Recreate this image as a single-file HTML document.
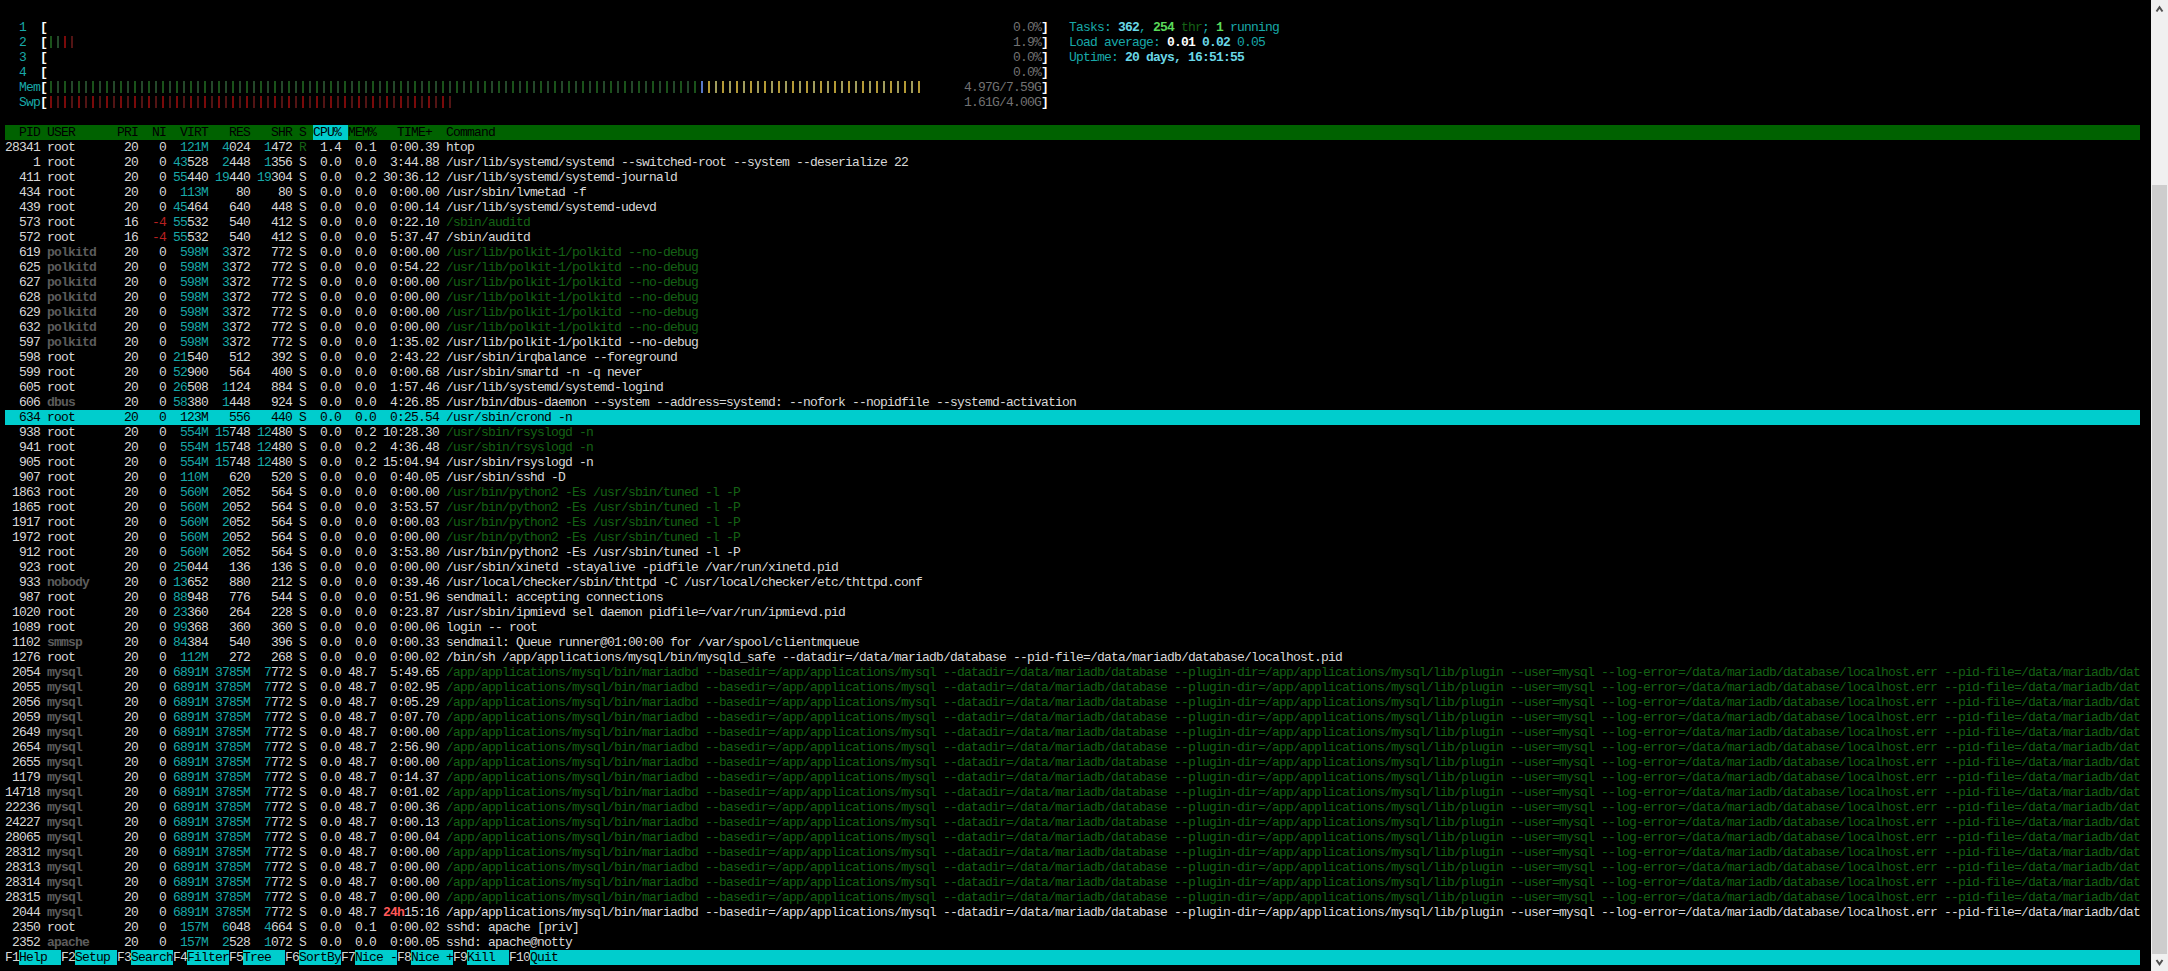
<!DOCTYPE html><html><head><meta charset="utf-8"><style>
html,body{margin:0;padding:0;background:#000;width:2168px;height:971px;overflow:hidden}
#t{position:absolute;left:0;top:0;width:2151px;height:971px;background:#000}
.l{position:absolute;left:5px;height:15px;line-height:15px;white-space:pre;font-family:"Liberation Mono",monospace;font-size:13px;letter-spacing:-0.80127px;color:#e8e8e8}
.bg{position:absolute;height:15px}
.br{position:absolute}
.sw{color:#d8d8d8}
.sW{color:#ffffff;font-weight:bold}
.sc{color:#18a8a8}
.sC{color:#6ad8e8;font-weight:bold}
.sg{color:#156215}
.sG{color:#5ada5a;font-weight:bold}
.sd{color:#5c5c5c;font-weight:bold}
.sk{color:#727272}
.sr{color:#b82020}
.sR{color:#ff5858;font-weight:bold}
.sK{color:#000000}
#sb{position:absolute;left:2151px;top:0;width:17px;height:971px;background:#f0f0f0}
#th{position:absolute;left:2152px;top:185px;width:15px;height:769px;background:#cdcdcd}
</style></head><body><div id="t">
<div class="bg" style="top:125px;left:5px;width:2135px;background:#006200"></div>
<div class="bg" style="top:125px;left:313px;width:35px;background:#00cdcd"></div>
<div class="bg" style="top:410px;left:5px;width:2135px;background:#00cdcd"></div>
<div class="bg" style="top:950px;left:19px;width:42px;background:#00cdcd"></div>
<div class="bg" style="top:950px;left:75px;width:42px;background:#00cdcd"></div>
<div class="bg" style="top:950px;left:131px;width:42px;background:#00cdcd"></div>
<div class="bg" style="top:950px;left:187px;width:42px;background:#00cdcd"></div>
<div class="bg" style="top:950px;left:243px;width:42px;background:#00cdcd"></div>
<div class="bg" style="top:950px;left:299px;width:42px;background:#00cdcd"></div>
<div class="bg" style="top:950px;left:355px;width:42px;background:#00cdcd"></div>
<div class="bg" style="top:950px;left:411px;width:42px;background:#00cdcd"></div>
<div class="bg" style="top:950px;left:467px;width:42px;background:#00cdcd"></div>
<div class="bg" style="top:950px;left:530px;width:1610px;background:#00cdcd"></div>
<div class="br" style="top:36px;left:50px;width:2px;height:12px;background:#1a521a"></div>
<div class="br" style="top:36px;left:57px;width:2px;height:12px;background:#24482a"></div>
<div class="br" style="top:36px;left:64px;width:2px;height:12px;background:#7a0a0a"></div>
<div class="br" style="top:36px;left:71px;width:2px;height:12px;background:#521414"></div>
<div class="br" style="top:81px;left:50px;width:2px;height:12px;background:#1a521a"></div>
<div class="br" style="top:81px;left:57px;width:2px;height:12px;background:#24482a"></div>
<div class="br" style="top:81px;left:64px;width:2px;height:12px;background:#1a521a"></div>
<div class="br" style="top:81px;left:71px;width:2px;height:12px;background:#24482a"></div>
<div class="br" style="top:81px;left:78px;width:2px;height:12px;background:#1a521a"></div>
<div class="br" style="top:81px;left:85px;width:2px;height:12px;background:#24482a"></div>
<div class="br" style="top:81px;left:92px;width:2px;height:12px;background:#1a521a"></div>
<div class="br" style="top:81px;left:99px;width:2px;height:12px;background:#24482a"></div>
<div class="br" style="top:81px;left:106px;width:2px;height:12px;background:#1a521a"></div>
<div class="br" style="top:81px;left:113px;width:2px;height:12px;background:#24482a"></div>
<div class="br" style="top:81px;left:120px;width:2px;height:12px;background:#1a521a"></div>
<div class="br" style="top:81px;left:127px;width:2px;height:12px;background:#24482a"></div>
<div class="br" style="top:81px;left:134px;width:2px;height:12px;background:#1a521a"></div>
<div class="br" style="top:81px;left:141px;width:2px;height:12px;background:#24482a"></div>
<div class="br" style="top:81px;left:148px;width:2px;height:12px;background:#1a521a"></div>
<div class="br" style="top:81px;left:155px;width:2px;height:12px;background:#24482a"></div>
<div class="br" style="top:81px;left:162px;width:2px;height:12px;background:#1a521a"></div>
<div class="br" style="top:81px;left:169px;width:2px;height:12px;background:#24482a"></div>
<div class="br" style="top:81px;left:176px;width:2px;height:12px;background:#1a521a"></div>
<div class="br" style="top:81px;left:183px;width:2px;height:12px;background:#24482a"></div>
<div class="br" style="top:81px;left:190px;width:2px;height:12px;background:#1a521a"></div>
<div class="br" style="top:81px;left:197px;width:2px;height:12px;background:#24482a"></div>
<div class="br" style="top:81px;left:204px;width:2px;height:12px;background:#1a521a"></div>
<div class="br" style="top:81px;left:211px;width:2px;height:12px;background:#24482a"></div>
<div class="br" style="top:81px;left:218px;width:2px;height:12px;background:#1a521a"></div>
<div class="br" style="top:81px;left:225px;width:2px;height:12px;background:#24482a"></div>
<div class="br" style="top:81px;left:232px;width:2px;height:12px;background:#1a521a"></div>
<div class="br" style="top:81px;left:239px;width:2px;height:12px;background:#24482a"></div>
<div class="br" style="top:81px;left:246px;width:2px;height:12px;background:#1a521a"></div>
<div class="br" style="top:81px;left:253px;width:2px;height:12px;background:#24482a"></div>
<div class="br" style="top:81px;left:260px;width:2px;height:12px;background:#1a521a"></div>
<div class="br" style="top:81px;left:267px;width:2px;height:12px;background:#24482a"></div>
<div class="br" style="top:81px;left:274px;width:2px;height:12px;background:#1a521a"></div>
<div class="br" style="top:81px;left:281px;width:2px;height:12px;background:#24482a"></div>
<div class="br" style="top:81px;left:288px;width:2px;height:12px;background:#1a521a"></div>
<div class="br" style="top:81px;left:295px;width:2px;height:12px;background:#24482a"></div>
<div class="br" style="top:81px;left:302px;width:2px;height:12px;background:#1a521a"></div>
<div class="br" style="top:81px;left:309px;width:2px;height:12px;background:#24482a"></div>
<div class="br" style="top:81px;left:316px;width:2px;height:12px;background:#1a521a"></div>
<div class="br" style="top:81px;left:323px;width:2px;height:12px;background:#24482a"></div>
<div class="br" style="top:81px;left:330px;width:2px;height:12px;background:#1a521a"></div>
<div class="br" style="top:81px;left:337px;width:2px;height:12px;background:#24482a"></div>
<div class="br" style="top:81px;left:344px;width:2px;height:12px;background:#1a521a"></div>
<div class="br" style="top:81px;left:351px;width:2px;height:12px;background:#24482a"></div>
<div class="br" style="top:81px;left:358px;width:2px;height:12px;background:#1a521a"></div>
<div class="br" style="top:81px;left:365px;width:2px;height:12px;background:#24482a"></div>
<div class="br" style="top:81px;left:372px;width:2px;height:12px;background:#1a521a"></div>
<div class="br" style="top:81px;left:379px;width:2px;height:12px;background:#24482a"></div>
<div class="br" style="top:81px;left:386px;width:2px;height:12px;background:#1a521a"></div>
<div class="br" style="top:81px;left:393px;width:2px;height:12px;background:#24482a"></div>
<div class="br" style="top:81px;left:400px;width:2px;height:12px;background:#1a521a"></div>
<div class="br" style="top:81px;left:407px;width:2px;height:12px;background:#24482a"></div>
<div class="br" style="top:81px;left:414px;width:2px;height:12px;background:#1a521a"></div>
<div class="br" style="top:81px;left:421px;width:2px;height:12px;background:#24482a"></div>
<div class="br" style="top:81px;left:428px;width:2px;height:12px;background:#1a521a"></div>
<div class="br" style="top:81px;left:435px;width:2px;height:12px;background:#24482a"></div>
<div class="br" style="top:81px;left:442px;width:2px;height:12px;background:#1a521a"></div>
<div class="br" style="top:81px;left:449px;width:2px;height:12px;background:#24482a"></div>
<div class="br" style="top:81px;left:456px;width:2px;height:12px;background:#1a521a"></div>
<div class="br" style="top:81px;left:463px;width:2px;height:12px;background:#24482a"></div>
<div class="br" style="top:81px;left:470px;width:2px;height:12px;background:#1a521a"></div>
<div class="br" style="top:81px;left:477px;width:2px;height:12px;background:#24482a"></div>
<div class="br" style="top:81px;left:484px;width:2px;height:12px;background:#1a521a"></div>
<div class="br" style="top:81px;left:491px;width:2px;height:12px;background:#24482a"></div>
<div class="br" style="top:81px;left:498px;width:2px;height:12px;background:#1a521a"></div>
<div class="br" style="top:81px;left:505px;width:2px;height:12px;background:#24482a"></div>
<div class="br" style="top:81px;left:512px;width:2px;height:12px;background:#1a521a"></div>
<div class="br" style="top:81px;left:519px;width:2px;height:12px;background:#24482a"></div>
<div class="br" style="top:81px;left:526px;width:2px;height:12px;background:#1a521a"></div>
<div class="br" style="top:81px;left:533px;width:2px;height:12px;background:#24482a"></div>
<div class="br" style="top:81px;left:540px;width:2px;height:12px;background:#1a521a"></div>
<div class="br" style="top:81px;left:547px;width:2px;height:12px;background:#24482a"></div>
<div class="br" style="top:81px;left:554px;width:2px;height:12px;background:#1a521a"></div>
<div class="br" style="top:81px;left:561px;width:2px;height:12px;background:#24482a"></div>
<div class="br" style="top:81px;left:568px;width:2px;height:12px;background:#1a521a"></div>
<div class="br" style="top:81px;left:575px;width:2px;height:12px;background:#24482a"></div>
<div class="br" style="top:81px;left:582px;width:2px;height:12px;background:#1a521a"></div>
<div class="br" style="top:81px;left:589px;width:2px;height:12px;background:#24482a"></div>
<div class="br" style="top:81px;left:596px;width:2px;height:12px;background:#1a521a"></div>
<div class="br" style="top:81px;left:603px;width:2px;height:12px;background:#24482a"></div>
<div class="br" style="top:81px;left:610px;width:2px;height:12px;background:#1a521a"></div>
<div class="br" style="top:81px;left:617px;width:2px;height:12px;background:#24482a"></div>
<div class="br" style="top:81px;left:624px;width:2px;height:12px;background:#1a521a"></div>
<div class="br" style="top:81px;left:631px;width:2px;height:12px;background:#24482a"></div>
<div class="br" style="top:81px;left:638px;width:2px;height:12px;background:#1a521a"></div>
<div class="br" style="top:81px;left:645px;width:2px;height:12px;background:#24482a"></div>
<div class="br" style="top:81px;left:652px;width:2px;height:12px;background:#1a521a"></div>
<div class="br" style="top:81px;left:659px;width:2px;height:12px;background:#24482a"></div>
<div class="br" style="top:81px;left:666px;width:2px;height:12px;background:#1a521a"></div>
<div class="br" style="top:81px;left:673px;width:2px;height:12px;background:#24482a"></div>
<div class="br" style="top:81px;left:680px;width:2px;height:12px;background:#1a521a"></div>
<div class="br" style="top:81px;left:687px;width:2px;height:12px;background:#24482a"></div>
<div class="br" style="top:81px;left:694px;width:2px;height:12px;background:#1a521a"></div>
<div class="br" style="top:81px;left:701px;width:2px;height:12px;background:#5878c8"></div>
<div class="br" style="top:81px;left:708px;width:2px;height:12px;background:#b49a36"></div>
<div class="br" style="top:81px;left:715px;width:2px;height:12px;background:#a09c5c"></div>
<div class="br" style="top:81px;left:722px;width:2px;height:12px;background:#b49a36"></div>
<div class="br" style="top:81px;left:729px;width:2px;height:12px;background:#a09c5c"></div>
<div class="br" style="top:81px;left:736px;width:2px;height:12px;background:#b49a36"></div>
<div class="br" style="top:81px;left:743px;width:2px;height:12px;background:#a09c5c"></div>
<div class="br" style="top:81px;left:750px;width:2px;height:12px;background:#b49a36"></div>
<div class="br" style="top:81px;left:757px;width:2px;height:12px;background:#a09c5c"></div>
<div class="br" style="top:81px;left:764px;width:2px;height:12px;background:#b49a36"></div>
<div class="br" style="top:81px;left:771px;width:2px;height:12px;background:#a09c5c"></div>
<div class="br" style="top:81px;left:778px;width:2px;height:12px;background:#b49a36"></div>
<div class="br" style="top:81px;left:785px;width:2px;height:12px;background:#a09c5c"></div>
<div class="br" style="top:81px;left:792px;width:2px;height:12px;background:#b49a36"></div>
<div class="br" style="top:81px;left:799px;width:2px;height:12px;background:#a09c5c"></div>
<div class="br" style="top:81px;left:806px;width:2px;height:12px;background:#b49a36"></div>
<div class="br" style="top:81px;left:813px;width:2px;height:12px;background:#a09c5c"></div>
<div class="br" style="top:81px;left:820px;width:2px;height:12px;background:#b49a36"></div>
<div class="br" style="top:81px;left:827px;width:2px;height:12px;background:#a09c5c"></div>
<div class="br" style="top:81px;left:834px;width:2px;height:12px;background:#b49a36"></div>
<div class="br" style="top:81px;left:841px;width:2px;height:12px;background:#a09c5c"></div>
<div class="br" style="top:81px;left:848px;width:2px;height:12px;background:#b49a36"></div>
<div class="br" style="top:81px;left:855px;width:2px;height:12px;background:#a09c5c"></div>
<div class="br" style="top:81px;left:862px;width:2px;height:12px;background:#b49a36"></div>
<div class="br" style="top:81px;left:869px;width:2px;height:12px;background:#a09c5c"></div>
<div class="br" style="top:81px;left:876px;width:2px;height:12px;background:#b49a36"></div>
<div class="br" style="top:81px;left:883px;width:2px;height:12px;background:#a09c5c"></div>
<div class="br" style="top:81px;left:890px;width:2px;height:12px;background:#b49a36"></div>
<div class="br" style="top:81px;left:897px;width:2px;height:12px;background:#a09c5c"></div>
<div class="br" style="top:81px;left:904px;width:2px;height:12px;background:#b49a36"></div>
<div class="br" style="top:81px;left:911px;width:2px;height:12px;background:#a09c5c"></div>
<div class="br" style="top:81px;left:918px;width:2px;height:12px;background:#b49a36"></div>
<div class="br" style="top:96px;left:50px;width:2px;height:12px;background:#7a0a0a"></div>
<div class="br" style="top:96px;left:57px;width:2px;height:12px;background:#521414"></div>
<div class="br" style="top:96px;left:64px;width:2px;height:12px;background:#7a0a0a"></div>
<div class="br" style="top:96px;left:71px;width:2px;height:12px;background:#521414"></div>
<div class="br" style="top:96px;left:78px;width:2px;height:12px;background:#7a0a0a"></div>
<div class="br" style="top:96px;left:85px;width:2px;height:12px;background:#521414"></div>
<div class="br" style="top:96px;left:92px;width:2px;height:12px;background:#7a0a0a"></div>
<div class="br" style="top:96px;left:99px;width:2px;height:12px;background:#521414"></div>
<div class="br" style="top:96px;left:106px;width:2px;height:12px;background:#7a0a0a"></div>
<div class="br" style="top:96px;left:113px;width:2px;height:12px;background:#521414"></div>
<div class="br" style="top:96px;left:120px;width:2px;height:12px;background:#7a0a0a"></div>
<div class="br" style="top:96px;left:127px;width:2px;height:12px;background:#521414"></div>
<div class="br" style="top:96px;left:134px;width:2px;height:12px;background:#7a0a0a"></div>
<div class="br" style="top:96px;left:141px;width:2px;height:12px;background:#521414"></div>
<div class="br" style="top:96px;left:148px;width:2px;height:12px;background:#7a0a0a"></div>
<div class="br" style="top:96px;left:155px;width:2px;height:12px;background:#521414"></div>
<div class="br" style="top:96px;left:162px;width:2px;height:12px;background:#7a0a0a"></div>
<div class="br" style="top:96px;left:169px;width:2px;height:12px;background:#521414"></div>
<div class="br" style="top:96px;left:176px;width:2px;height:12px;background:#7a0a0a"></div>
<div class="br" style="top:96px;left:183px;width:2px;height:12px;background:#521414"></div>
<div class="br" style="top:96px;left:190px;width:2px;height:12px;background:#7a0a0a"></div>
<div class="br" style="top:96px;left:197px;width:2px;height:12px;background:#521414"></div>
<div class="br" style="top:96px;left:204px;width:2px;height:12px;background:#7a0a0a"></div>
<div class="br" style="top:96px;left:211px;width:2px;height:12px;background:#521414"></div>
<div class="br" style="top:96px;left:218px;width:2px;height:12px;background:#7a0a0a"></div>
<div class="br" style="top:96px;left:225px;width:2px;height:12px;background:#521414"></div>
<div class="br" style="top:96px;left:232px;width:2px;height:12px;background:#7a0a0a"></div>
<div class="br" style="top:96px;left:239px;width:2px;height:12px;background:#521414"></div>
<div class="br" style="top:96px;left:246px;width:2px;height:12px;background:#7a0a0a"></div>
<div class="br" style="top:96px;left:253px;width:2px;height:12px;background:#521414"></div>
<div class="br" style="top:96px;left:260px;width:2px;height:12px;background:#7a0a0a"></div>
<div class="br" style="top:96px;left:267px;width:2px;height:12px;background:#521414"></div>
<div class="br" style="top:96px;left:274px;width:2px;height:12px;background:#7a0a0a"></div>
<div class="br" style="top:96px;left:281px;width:2px;height:12px;background:#521414"></div>
<div class="br" style="top:96px;left:288px;width:2px;height:12px;background:#7a0a0a"></div>
<div class="br" style="top:96px;left:295px;width:2px;height:12px;background:#521414"></div>
<div class="br" style="top:96px;left:302px;width:2px;height:12px;background:#7a0a0a"></div>
<div class="br" style="top:96px;left:309px;width:2px;height:12px;background:#521414"></div>
<div class="br" style="top:96px;left:316px;width:2px;height:12px;background:#7a0a0a"></div>
<div class="br" style="top:96px;left:323px;width:2px;height:12px;background:#521414"></div>
<div class="br" style="top:96px;left:330px;width:2px;height:12px;background:#7a0a0a"></div>
<div class="br" style="top:96px;left:337px;width:2px;height:12px;background:#521414"></div>
<div class="br" style="top:96px;left:344px;width:2px;height:12px;background:#7a0a0a"></div>
<div class="br" style="top:96px;left:351px;width:2px;height:12px;background:#521414"></div>
<div class="br" style="top:96px;left:358px;width:2px;height:12px;background:#7a0a0a"></div>
<div class="br" style="top:96px;left:365px;width:2px;height:12px;background:#521414"></div>
<div class="br" style="top:96px;left:372px;width:2px;height:12px;background:#7a0a0a"></div>
<div class="br" style="top:96px;left:379px;width:2px;height:12px;background:#521414"></div>
<div class="br" style="top:96px;left:386px;width:2px;height:12px;background:#7a0a0a"></div>
<div class="br" style="top:96px;left:393px;width:2px;height:12px;background:#521414"></div>
<div class="br" style="top:96px;left:400px;width:2px;height:12px;background:#7a0a0a"></div>
<div class="br" style="top:96px;left:407px;width:2px;height:12px;background:#521414"></div>
<div class="br" style="top:96px;left:414px;width:2px;height:12px;background:#7a0a0a"></div>
<div class="br" style="top:96px;left:421px;width:2px;height:12px;background:#521414"></div>
<div class="br" style="top:96px;left:428px;width:2px;height:12px;background:#7a0a0a"></div>
<div class="br" style="top:96px;left:435px;width:2px;height:12px;background:#521414"></div>
<div class="br" style="top:96px;left:442px;width:2px;height:12px;background:#7a0a0a"></div>
<div class="br" style="top:96px;left:449px;width:2px;height:12px;background:#521414"></div>
<div class="l sc" style="top:20px;left:19px">1</div>
<div class="l sW" style="top:20px;left:40px">[</div>
<div class="l sW" style="top:20px;left:1041px">]</div>
<div class="l sk" style="top:20px;left:1013px">0.0%</div>
<div class="l sc" style="top:20px;left:1069px">Tasks: </div>
<div class="l sC" style="top:20px;left:1118px">362</div>
<div class="l sc" style="top:20px;left:1139px">, </div>
<div class="l sG" style="top:20px;left:1153px">254</div>
<div class="l sg" style="top:20px;left:1174px"> thr</div>
<div class="l sc" style="top:20px;left:1202px">; </div>
<div class="l sG" style="top:20px;left:1216px">1</div>
<div class="l sc" style="top:20px;left:1223px"> running</div>
<div class="l sc" style="top:35px;left:19px">2</div>
<div class="l sW" style="top:35px;left:40px">[</div>
<div class="l sW" style="top:35px;left:1041px">]</div>
<div class="l sk" style="top:35px;left:1013px">1.9%</div>
<div class="l sc" style="top:35px;left:1069px">Load average: </div>
<div class="l sW" style="top:35px;left:1167px">0.01 </div>
<div class="l sC" style="top:35px;left:1202px">0.02 </div>
<div class="l sc" style="top:35px;left:1237px">0.05</div>
<div class="l sc" style="top:50px;left:19px">3</div>
<div class="l sW" style="top:50px;left:40px">[</div>
<div class="l sW" style="top:50px;left:1041px">]</div>
<div class="l sk" style="top:50px;left:1013px">0.0%</div>
<div class="l sc" style="top:50px;left:1069px">Uptime: </div>
<div class="l sC" style="top:50px;left:1125px">20 days, 16:51:55</div>
<div class="l sc" style="top:65px;left:19px">4</div>
<div class="l sW" style="top:65px;left:40px">[</div>
<div class="l sW" style="top:65px;left:1041px">]</div>
<div class="l sk" style="top:65px;left:1013px">0.0%</div>
<div class="l sc" style="top:80px;left:19px">Mem</div>
<div class="l sW" style="top:80px;left:40px">[</div>
<div class="l sW" style="top:80px;left:1041px">]</div>
<div class="l sk" style="top:80px;left:964px">4.97G/7.59G</div>
<div class="l sc" style="top:95px;left:19px">Swp</div>
<div class="l sW" style="top:95px;left:40px">[</div>
<div class="l sW" style="top:95px;left:1041px">]</div>
<div class="l sk" style="top:95px;left:964px">1.61G/4.00G</div>
<div class="l sK" style="top:125px;left:5px">  PID USER      PRI  NI  VIRT   RES   SHR S CPU% MEM%   TIME+  Command</div>
<div class="l sw" style="top:140px;left:5px">28341 </div>
<div class="l sw" style="top:140px;left:47px">root      </div>
<div class="l sw" style="top:140px;left:117px"> 20 </div>
<div class="l sw" style="top:140px;left:145px">  0 </div>
<div class="l sc" style="top:140px;left:173px"> 121M</div>
<div class="l sw" style="top:140px;left:208px"> </div>
<div class="l sc" style="top:140px;left:215px"> 4</div>
<div class="l sw" style="top:140px;left:229px">024</div>
<div class="l sw" style="top:140px;left:250px"> </div>
<div class="l sc" style="top:140px;left:257px"> 1</div>
<div class="l sw" style="top:140px;left:271px">472</div>
<div class="l sw" style="top:140px;left:292px"> </div>
<div class="l sg" style="top:140px;left:299px">R </div>
<div class="l sw" style="top:140px;left:313px"> 1.4 </div>
<div class="l sw" style="top:140px;left:348px"> 0.1 </div>
<div class="l sw" style="top:140px;left:383px"> 0:00.39 </div>
<div class="l sw" style="top:140px;left:446px">htop</div>
<div class="l sw" style="top:155px;left:5px">    1 </div>
<div class="l sw" style="top:155px;left:47px">root      </div>
<div class="l sw" style="top:155px;left:117px"> 20 </div>
<div class="l sw" style="top:155px;left:145px">  0 </div>
<div class="l sc" style="top:155px;left:173px">43</div>
<div class="l sw" style="top:155px;left:187px">528</div>
<div class="l sw" style="top:155px;left:208px"> </div>
<div class="l sc" style="top:155px;left:215px"> 2</div>
<div class="l sw" style="top:155px;left:229px">448</div>
<div class="l sw" style="top:155px;left:250px"> </div>
<div class="l sc" style="top:155px;left:257px"> 1</div>
<div class="l sw" style="top:155px;left:271px">356</div>
<div class="l sw" style="top:155px;left:292px"> </div>
<div class="l sw" style="top:155px;left:299px">S </div>
<div class="l sw" style="top:155px;left:313px"> 0.0 </div>
<div class="l sw" style="top:155px;left:348px"> 0.0 </div>
<div class="l sw" style="top:155px;left:383px"> 3:44.88 </div>
<div class="l sw" style="top:155px;left:446px">/usr/lib/systemd/systemd --switched-root --system --deserialize 22</div>
<div class="l sw" style="top:170px;left:5px">  411 </div>
<div class="l sw" style="top:170px;left:47px">root      </div>
<div class="l sw" style="top:170px;left:117px"> 20 </div>
<div class="l sw" style="top:170px;left:145px">  0 </div>
<div class="l sc" style="top:170px;left:173px">55</div>
<div class="l sw" style="top:170px;left:187px">440</div>
<div class="l sw" style="top:170px;left:208px"> </div>
<div class="l sc" style="top:170px;left:215px">19</div>
<div class="l sw" style="top:170px;left:229px">440</div>
<div class="l sw" style="top:170px;left:250px"> </div>
<div class="l sc" style="top:170px;left:257px">19</div>
<div class="l sw" style="top:170px;left:271px">304</div>
<div class="l sw" style="top:170px;left:292px"> </div>
<div class="l sw" style="top:170px;left:299px">S </div>
<div class="l sw" style="top:170px;left:313px"> 0.0 </div>
<div class="l sw" style="top:170px;left:348px"> 0.2 </div>
<div class="l sw" style="top:170px;left:383px">30:36.12 </div>
<div class="l sw" style="top:170px;left:446px">/usr/lib/systemd/systemd-journald</div>
<div class="l sw" style="top:185px;left:5px">  434 </div>
<div class="l sw" style="top:185px;left:47px">root      </div>
<div class="l sw" style="top:185px;left:117px"> 20 </div>
<div class="l sw" style="top:185px;left:145px">  0 </div>
<div class="l sc" style="top:185px;left:173px"> 113M</div>
<div class="l sw" style="top:185px;left:208px"> </div>
<div class="l sw" style="top:185px;left:215px">   80</div>
<div class="l sw" style="top:185px;left:250px"> </div>
<div class="l sw" style="top:185px;left:257px">   80</div>
<div class="l sw" style="top:185px;left:292px"> </div>
<div class="l sw" style="top:185px;left:299px">S </div>
<div class="l sw" style="top:185px;left:313px"> 0.0 </div>
<div class="l sw" style="top:185px;left:348px"> 0.0 </div>
<div class="l sw" style="top:185px;left:383px"> 0:00.00 </div>
<div class="l sw" style="top:185px;left:446px">/usr/sbin/lvmetad -f</div>
<div class="l sw" style="top:200px;left:5px">  439 </div>
<div class="l sw" style="top:200px;left:47px">root      </div>
<div class="l sw" style="top:200px;left:117px"> 20 </div>
<div class="l sw" style="top:200px;left:145px">  0 </div>
<div class="l sc" style="top:200px;left:173px">45</div>
<div class="l sw" style="top:200px;left:187px">464</div>
<div class="l sw" style="top:200px;left:208px"> </div>
<div class="l sw" style="top:200px;left:215px">  640</div>
<div class="l sw" style="top:200px;left:250px"> </div>
<div class="l sw" style="top:200px;left:257px">  448</div>
<div class="l sw" style="top:200px;left:292px"> </div>
<div class="l sw" style="top:200px;left:299px">S </div>
<div class="l sw" style="top:200px;left:313px"> 0.0 </div>
<div class="l sw" style="top:200px;left:348px"> 0.0 </div>
<div class="l sw" style="top:200px;left:383px"> 0:00.14 </div>
<div class="l sw" style="top:200px;left:446px">/usr/lib/systemd/systemd-udevd</div>
<div class="l sw" style="top:215px;left:5px">  573 </div>
<div class="l sw" style="top:215px;left:47px">root      </div>
<div class="l sw" style="top:215px;left:117px"> 16 </div>
<div class="l sr" style="top:215px;left:145px"> -4 </div>
<div class="l sc" style="top:215px;left:173px">55</div>
<div class="l sw" style="top:215px;left:187px">532</div>
<div class="l sw" style="top:215px;left:208px"> </div>
<div class="l sw" style="top:215px;left:215px">  540</div>
<div class="l sw" style="top:215px;left:250px"> </div>
<div class="l sw" style="top:215px;left:257px">  412</div>
<div class="l sw" style="top:215px;left:292px"> </div>
<div class="l sw" style="top:215px;left:299px">S </div>
<div class="l sw" style="top:215px;left:313px"> 0.0 </div>
<div class="l sw" style="top:215px;left:348px"> 0.0 </div>
<div class="l sw" style="top:215px;left:383px"> 0:22.10 </div>
<div class="l sg" style="top:215px;left:446px">/sbin/auditd</div>
<div class="l sw" style="top:230px;left:5px">  572 </div>
<div class="l sw" style="top:230px;left:47px">root      </div>
<div class="l sw" style="top:230px;left:117px"> 16 </div>
<div class="l sr" style="top:230px;left:145px"> -4 </div>
<div class="l sc" style="top:230px;left:173px">55</div>
<div class="l sw" style="top:230px;left:187px">532</div>
<div class="l sw" style="top:230px;left:208px"> </div>
<div class="l sw" style="top:230px;left:215px">  540</div>
<div class="l sw" style="top:230px;left:250px"> </div>
<div class="l sw" style="top:230px;left:257px">  412</div>
<div class="l sw" style="top:230px;left:292px"> </div>
<div class="l sw" style="top:230px;left:299px">S </div>
<div class="l sw" style="top:230px;left:313px"> 0.0 </div>
<div class="l sw" style="top:230px;left:348px"> 0.0 </div>
<div class="l sw" style="top:230px;left:383px"> 5:37.47 </div>
<div class="l sw" style="top:230px;left:446px">/sbin/auditd</div>
<div class="l sw" style="top:245px;left:5px">  619 </div>
<div class="l sd" style="top:245px;left:47px">polkitd   </div>
<div class="l sw" style="top:245px;left:117px"> 20 </div>
<div class="l sw" style="top:245px;left:145px">  0 </div>
<div class="l sc" style="top:245px;left:173px"> 598M</div>
<div class="l sw" style="top:245px;left:208px"> </div>
<div class="l sc" style="top:245px;left:215px"> 3</div>
<div class="l sw" style="top:245px;left:229px">372</div>
<div class="l sw" style="top:245px;left:250px"> </div>
<div class="l sw" style="top:245px;left:257px">  772</div>
<div class="l sw" style="top:245px;left:292px"> </div>
<div class="l sw" style="top:245px;left:299px">S </div>
<div class="l sw" style="top:245px;left:313px"> 0.0 </div>
<div class="l sw" style="top:245px;left:348px"> 0.0 </div>
<div class="l sw" style="top:245px;left:383px"> 0:00.00 </div>
<div class="l sg" style="top:245px;left:446px">/usr/lib/polkit-1/polkitd --no-debug</div>
<div class="l sw" style="top:260px;left:5px">  625 </div>
<div class="l sd" style="top:260px;left:47px">polkitd   </div>
<div class="l sw" style="top:260px;left:117px"> 20 </div>
<div class="l sw" style="top:260px;left:145px">  0 </div>
<div class="l sc" style="top:260px;left:173px"> 598M</div>
<div class="l sw" style="top:260px;left:208px"> </div>
<div class="l sc" style="top:260px;left:215px"> 3</div>
<div class="l sw" style="top:260px;left:229px">372</div>
<div class="l sw" style="top:260px;left:250px"> </div>
<div class="l sw" style="top:260px;left:257px">  772</div>
<div class="l sw" style="top:260px;left:292px"> </div>
<div class="l sw" style="top:260px;left:299px">S </div>
<div class="l sw" style="top:260px;left:313px"> 0.0 </div>
<div class="l sw" style="top:260px;left:348px"> 0.0 </div>
<div class="l sw" style="top:260px;left:383px"> 0:54.22 </div>
<div class="l sg" style="top:260px;left:446px">/usr/lib/polkit-1/polkitd --no-debug</div>
<div class="l sw" style="top:275px;left:5px">  627 </div>
<div class="l sd" style="top:275px;left:47px">polkitd   </div>
<div class="l sw" style="top:275px;left:117px"> 20 </div>
<div class="l sw" style="top:275px;left:145px">  0 </div>
<div class="l sc" style="top:275px;left:173px"> 598M</div>
<div class="l sw" style="top:275px;left:208px"> </div>
<div class="l sc" style="top:275px;left:215px"> 3</div>
<div class="l sw" style="top:275px;left:229px">372</div>
<div class="l sw" style="top:275px;left:250px"> </div>
<div class="l sw" style="top:275px;left:257px">  772</div>
<div class="l sw" style="top:275px;left:292px"> </div>
<div class="l sw" style="top:275px;left:299px">S </div>
<div class="l sw" style="top:275px;left:313px"> 0.0 </div>
<div class="l sw" style="top:275px;left:348px"> 0.0 </div>
<div class="l sw" style="top:275px;left:383px"> 0:00.00 </div>
<div class="l sg" style="top:275px;left:446px">/usr/lib/polkit-1/polkitd --no-debug</div>
<div class="l sw" style="top:290px;left:5px">  628 </div>
<div class="l sd" style="top:290px;left:47px">polkitd   </div>
<div class="l sw" style="top:290px;left:117px"> 20 </div>
<div class="l sw" style="top:290px;left:145px">  0 </div>
<div class="l sc" style="top:290px;left:173px"> 598M</div>
<div class="l sw" style="top:290px;left:208px"> </div>
<div class="l sc" style="top:290px;left:215px"> 3</div>
<div class="l sw" style="top:290px;left:229px">372</div>
<div class="l sw" style="top:290px;left:250px"> </div>
<div class="l sw" style="top:290px;left:257px">  772</div>
<div class="l sw" style="top:290px;left:292px"> </div>
<div class="l sw" style="top:290px;left:299px">S </div>
<div class="l sw" style="top:290px;left:313px"> 0.0 </div>
<div class="l sw" style="top:290px;left:348px"> 0.0 </div>
<div class="l sw" style="top:290px;left:383px"> 0:00.00 </div>
<div class="l sg" style="top:290px;left:446px">/usr/lib/polkit-1/polkitd --no-debug</div>
<div class="l sw" style="top:305px;left:5px">  629 </div>
<div class="l sd" style="top:305px;left:47px">polkitd   </div>
<div class="l sw" style="top:305px;left:117px"> 20 </div>
<div class="l sw" style="top:305px;left:145px">  0 </div>
<div class="l sc" style="top:305px;left:173px"> 598M</div>
<div class="l sw" style="top:305px;left:208px"> </div>
<div class="l sc" style="top:305px;left:215px"> 3</div>
<div class="l sw" style="top:305px;left:229px">372</div>
<div class="l sw" style="top:305px;left:250px"> </div>
<div class="l sw" style="top:305px;left:257px">  772</div>
<div class="l sw" style="top:305px;left:292px"> </div>
<div class="l sw" style="top:305px;left:299px">S </div>
<div class="l sw" style="top:305px;left:313px"> 0.0 </div>
<div class="l sw" style="top:305px;left:348px"> 0.0 </div>
<div class="l sw" style="top:305px;left:383px"> 0:00.00 </div>
<div class="l sg" style="top:305px;left:446px">/usr/lib/polkit-1/polkitd --no-debug</div>
<div class="l sw" style="top:320px;left:5px">  632 </div>
<div class="l sd" style="top:320px;left:47px">polkitd   </div>
<div class="l sw" style="top:320px;left:117px"> 20 </div>
<div class="l sw" style="top:320px;left:145px">  0 </div>
<div class="l sc" style="top:320px;left:173px"> 598M</div>
<div class="l sw" style="top:320px;left:208px"> </div>
<div class="l sc" style="top:320px;left:215px"> 3</div>
<div class="l sw" style="top:320px;left:229px">372</div>
<div class="l sw" style="top:320px;left:250px"> </div>
<div class="l sw" style="top:320px;left:257px">  772</div>
<div class="l sw" style="top:320px;left:292px"> </div>
<div class="l sw" style="top:320px;left:299px">S </div>
<div class="l sw" style="top:320px;left:313px"> 0.0 </div>
<div class="l sw" style="top:320px;left:348px"> 0.0 </div>
<div class="l sw" style="top:320px;left:383px"> 0:00.00 </div>
<div class="l sg" style="top:320px;left:446px">/usr/lib/polkit-1/polkitd --no-debug</div>
<div class="l sw" style="top:335px;left:5px">  597 </div>
<div class="l sd" style="top:335px;left:47px">polkitd   </div>
<div class="l sw" style="top:335px;left:117px"> 20 </div>
<div class="l sw" style="top:335px;left:145px">  0 </div>
<div class="l sc" style="top:335px;left:173px"> 598M</div>
<div class="l sw" style="top:335px;left:208px"> </div>
<div class="l sc" style="top:335px;left:215px"> 3</div>
<div class="l sw" style="top:335px;left:229px">372</div>
<div class="l sw" style="top:335px;left:250px"> </div>
<div class="l sw" style="top:335px;left:257px">  772</div>
<div class="l sw" style="top:335px;left:292px"> </div>
<div class="l sw" style="top:335px;left:299px">S </div>
<div class="l sw" style="top:335px;left:313px"> 0.0 </div>
<div class="l sw" style="top:335px;left:348px"> 0.0 </div>
<div class="l sw" style="top:335px;left:383px"> 1:35.02 </div>
<div class="l sw" style="top:335px;left:446px">/usr/lib/polkit-1/polkitd --no-debug</div>
<div class="l sw" style="top:350px;left:5px">  598 </div>
<div class="l sw" style="top:350px;left:47px">root      </div>
<div class="l sw" style="top:350px;left:117px"> 20 </div>
<div class="l sw" style="top:350px;left:145px">  0 </div>
<div class="l sc" style="top:350px;left:173px">21</div>
<div class="l sw" style="top:350px;left:187px">540</div>
<div class="l sw" style="top:350px;left:208px"> </div>
<div class="l sw" style="top:350px;left:215px">  512</div>
<div class="l sw" style="top:350px;left:250px"> </div>
<div class="l sw" style="top:350px;left:257px">  392</div>
<div class="l sw" style="top:350px;left:292px"> </div>
<div class="l sw" style="top:350px;left:299px">S </div>
<div class="l sw" style="top:350px;left:313px"> 0.0 </div>
<div class="l sw" style="top:350px;left:348px"> 0.0 </div>
<div class="l sw" style="top:350px;left:383px"> 2:43.22 </div>
<div class="l sw" style="top:350px;left:446px">/usr/sbin/irqbalance --foreground</div>
<div class="l sw" style="top:365px;left:5px">  599 </div>
<div class="l sw" style="top:365px;left:47px">root      </div>
<div class="l sw" style="top:365px;left:117px"> 20 </div>
<div class="l sw" style="top:365px;left:145px">  0 </div>
<div class="l sc" style="top:365px;left:173px">52</div>
<div class="l sw" style="top:365px;left:187px">900</div>
<div class="l sw" style="top:365px;left:208px"> </div>
<div class="l sw" style="top:365px;left:215px">  564</div>
<div class="l sw" style="top:365px;left:250px"> </div>
<div class="l sw" style="top:365px;left:257px">  400</div>
<div class="l sw" style="top:365px;left:292px"> </div>
<div class="l sw" style="top:365px;left:299px">S </div>
<div class="l sw" style="top:365px;left:313px"> 0.0 </div>
<div class="l sw" style="top:365px;left:348px"> 0.0 </div>
<div class="l sw" style="top:365px;left:383px"> 0:00.68 </div>
<div class="l sw" style="top:365px;left:446px">/usr/sbin/smartd -n -q never</div>
<div class="l sw" style="top:380px;left:5px">  605 </div>
<div class="l sw" style="top:380px;left:47px">root      </div>
<div class="l sw" style="top:380px;left:117px"> 20 </div>
<div class="l sw" style="top:380px;left:145px">  0 </div>
<div class="l sc" style="top:380px;left:173px">26</div>
<div class="l sw" style="top:380px;left:187px">508</div>
<div class="l sw" style="top:380px;left:208px"> </div>
<div class="l sc" style="top:380px;left:215px"> 1</div>
<div class="l sw" style="top:380px;left:229px">124</div>
<div class="l sw" style="top:380px;left:250px"> </div>
<div class="l sw" style="top:380px;left:257px">  884</div>
<div class="l sw" style="top:380px;left:292px"> </div>
<div class="l sw" style="top:380px;left:299px">S </div>
<div class="l sw" style="top:380px;left:313px"> 0.0 </div>
<div class="l sw" style="top:380px;left:348px"> 0.0 </div>
<div class="l sw" style="top:380px;left:383px"> 1:57.46 </div>
<div class="l sw" style="top:380px;left:446px">/usr/lib/systemd/systemd-logind</div>
<div class="l sw" style="top:395px;left:5px">  606 </div>
<div class="l sd" style="top:395px;left:47px">dbus      </div>
<div class="l sw" style="top:395px;left:117px"> 20 </div>
<div class="l sw" style="top:395px;left:145px">  0 </div>
<div class="l sc" style="top:395px;left:173px">58</div>
<div class="l sw" style="top:395px;left:187px">380</div>
<div class="l sw" style="top:395px;left:208px"> </div>
<div class="l sc" style="top:395px;left:215px"> 1</div>
<div class="l sw" style="top:395px;left:229px">448</div>
<div class="l sw" style="top:395px;left:250px"> </div>
<div class="l sw" style="top:395px;left:257px">  924</div>
<div class="l sw" style="top:395px;left:292px"> </div>
<div class="l sw" style="top:395px;left:299px">S </div>
<div class="l sw" style="top:395px;left:313px"> 0.0 </div>
<div class="l sw" style="top:395px;left:348px"> 0.0 </div>
<div class="l sw" style="top:395px;left:383px"> 4:26.85 </div>
<div class="l sw" style="top:395px;left:446px">/usr/bin/dbus-daemon --system --address=systemd: --nofork --nopidfile --systemd-activation</div>
<div class="l sK" style="top:410px;left:5px">  634 </div>
<div class="l sK" style="top:410px;left:47px">root      </div>
<div class="l sK" style="top:410px;left:117px"> 20 </div>
<div class="l sK" style="top:410px;left:145px">  0 </div>
<div class="l sK" style="top:410px;left:173px"> 123M</div>
<div class="l sK" style="top:410px;left:208px"> </div>
<div class="l sK" style="top:410px;left:215px">  556</div>
<div class="l sK" style="top:410px;left:250px"> </div>
<div class="l sK" style="top:410px;left:257px">  440</div>
<div class="l sK" style="top:410px;left:292px"> </div>
<div class="l sK" style="top:410px;left:299px">S </div>
<div class="l sK" style="top:410px;left:313px"> 0.0 </div>
<div class="l sK" style="top:410px;left:348px"> 0.0 </div>
<div class="l sK" style="top:410px;left:383px"> 0:25.54 </div>
<div class="l sK" style="top:410px;left:446px">/usr/sbin/crond -n</div>
<div class="l sw" style="top:425px;left:5px">  938 </div>
<div class="l sw" style="top:425px;left:47px">root      </div>
<div class="l sw" style="top:425px;left:117px"> 20 </div>
<div class="l sw" style="top:425px;left:145px">  0 </div>
<div class="l sc" style="top:425px;left:173px"> 554M</div>
<div class="l sw" style="top:425px;left:208px"> </div>
<div class="l sc" style="top:425px;left:215px">15</div>
<div class="l sw" style="top:425px;left:229px">748</div>
<div class="l sw" style="top:425px;left:250px"> </div>
<div class="l sc" style="top:425px;left:257px">12</div>
<div class="l sw" style="top:425px;left:271px">480</div>
<div class="l sw" style="top:425px;left:292px"> </div>
<div class="l sw" style="top:425px;left:299px">S </div>
<div class="l sw" style="top:425px;left:313px"> 0.0 </div>
<div class="l sw" style="top:425px;left:348px"> 0.2 </div>
<div class="l sw" style="top:425px;left:383px">10:28.30 </div>
<div class="l sg" style="top:425px;left:446px">/usr/sbin/rsyslogd -n</div>
<div class="l sw" style="top:440px;left:5px">  941 </div>
<div class="l sw" style="top:440px;left:47px">root      </div>
<div class="l sw" style="top:440px;left:117px"> 20 </div>
<div class="l sw" style="top:440px;left:145px">  0 </div>
<div class="l sc" style="top:440px;left:173px"> 554M</div>
<div class="l sw" style="top:440px;left:208px"> </div>
<div class="l sc" style="top:440px;left:215px">15</div>
<div class="l sw" style="top:440px;left:229px">748</div>
<div class="l sw" style="top:440px;left:250px"> </div>
<div class="l sc" style="top:440px;left:257px">12</div>
<div class="l sw" style="top:440px;left:271px">480</div>
<div class="l sw" style="top:440px;left:292px"> </div>
<div class="l sw" style="top:440px;left:299px">S </div>
<div class="l sw" style="top:440px;left:313px"> 0.0 </div>
<div class="l sw" style="top:440px;left:348px"> 0.2 </div>
<div class="l sw" style="top:440px;left:383px"> 4:36.48 </div>
<div class="l sg" style="top:440px;left:446px">/usr/sbin/rsyslogd -n</div>
<div class="l sw" style="top:455px;left:5px">  905 </div>
<div class="l sw" style="top:455px;left:47px">root      </div>
<div class="l sw" style="top:455px;left:117px"> 20 </div>
<div class="l sw" style="top:455px;left:145px">  0 </div>
<div class="l sc" style="top:455px;left:173px"> 554M</div>
<div class="l sw" style="top:455px;left:208px"> </div>
<div class="l sc" style="top:455px;left:215px">15</div>
<div class="l sw" style="top:455px;left:229px">748</div>
<div class="l sw" style="top:455px;left:250px"> </div>
<div class="l sc" style="top:455px;left:257px">12</div>
<div class="l sw" style="top:455px;left:271px">480</div>
<div class="l sw" style="top:455px;left:292px"> </div>
<div class="l sw" style="top:455px;left:299px">S </div>
<div class="l sw" style="top:455px;left:313px"> 0.0 </div>
<div class="l sw" style="top:455px;left:348px"> 0.2 </div>
<div class="l sw" style="top:455px;left:383px">15:04.94 </div>
<div class="l sw" style="top:455px;left:446px">/usr/sbin/rsyslogd -n</div>
<div class="l sw" style="top:470px;left:5px">  907 </div>
<div class="l sw" style="top:470px;left:47px">root      </div>
<div class="l sw" style="top:470px;left:117px"> 20 </div>
<div class="l sw" style="top:470px;left:145px">  0 </div>
<div class="l sc" style="top:470px;left:173px"> 110M</div>
<div class="l sw" style="top:470px;left:208px"> </div>
<div class="l sw" style="top:470px;left:215px">  620</div>
<div class="l sw" style="top:470px;left:250px"> </div>
<div class="l sw" style="top:470px;left:257px">  520</div>
<div class="l sw" style="top:470px;left:292px"> </div>
<div class="l sw" style="top:470px;left:299px">S </div>
<div class="l sw" style="top:470px;left:313px"> 0.0 </div>
<div class="l sw" style="top:470px;left:348px"> 0.0 </div>
<div class="l sw" style="top:470px;left:383px"> 0:40.05 </div>
<div class="l sw" style="top:470px;left:446px">/usr/sbin/sshd -D</div>
<div class="l sw" style="top:485px;left:5px"> 1863 </div>
<div class="l sw" style="top:485px;left:47px">root      </div>
<div class="l sw" style="top:485px;left:117px"> 20 </div>
<div class="l sw" style="top:485px;left:145px">  0 </div>
<div class="l sc" style="top:485px;left:173px"> 560M</div>
<div class="l sw" style="top:485px;left:208px"> </div>
<div class="l sc" style="top:485px;left:215px"> 2</div>
<div class="l sw" style="top:485px;left:229px">052</div>
<div class="l sw" style="top:485px;left:250px"> </div>
<div class="l sw" style="top:485px;left:257px">  564</div>
<div class="l sw" style="top:485px;left:292px"> </div>
<div class="l sw" style="top:485px;left:299px">S </div>
<div class="l sw" style="top:485px;left:313px"> 0.0 </div>
<div class="l sw" style="top:485px;left:348px"> 0.0 </div>
<div class="l sw" style="top:485px;left:383px"> 0:00.00 </div>
<div class="l sg" style="top:485px;left:446px">/usr/bin/python2 -Es /usr/sbin/tuned -l -P</div>
<div class="l sw" style="top:500px;left:5px"> 1865 </div>
<div class="l sw" style="top:500px;left:47px">root      </div>
<div class="l sw" style="top:500px;left:117px"> 20 </div>
<div class="l sw" style="top:500px;left:145px">  0 </div>
<div class="l sc" style="top:500px;left:173px"> 560M</div>
<div class="l sw" style="top:500px;left:208px"> </div>
<div class="l sc" style="top:500px;left:215px"> 2</div>
<div class="l sw" style="top:500px;left:229px">052</div>
<div class="l sw" style="top:500px;left:250px"> </div>
<div class="l sw" style="top:500px;left:257px">  564</div>
<div class="l sw" style="top:500px;left:292px"> </div>
<div class="l sw" style="top:500px;left:299px">S </div>
<div class="l sw" style="top:500px;left:313px"> 0.0 </div>
<div class="l sw" style="top:500px;left:348px"> 0.0 </div>
<div class="l sw" style="top:500px;left:383px"> 3:53.57 </div>
<div class="l sg" style="top:500px;left:446px">/usr/bin/python2 -Es /usr/sbin/tuned -l -P</div>
<div class="l sw" style="top:515px;left:5px"> 1917 </div>
<div class="l sw" style="top:515px;left:47px">root      </div>
<div class="l sw" style="top:515px;left:117px"> 20 </div>
<div class="l sw" style="top:515px;left:145px">  0 </div>
<div class="l sc" style="top:515px;left:173px"> 560M</div>
<div class="l sw" style="top:515px;left:208px"> </div>
<div class="l sc" style="top:515px;left:215px"> 2</div>
<div class="l sw" style="top:515px;left:229px">052</div>
<div class="l sw" style="top:515px;left:250px"> </div>
<div class="l sw" style="top:515px;left:257px">  564</div>
<div class="l sw" style="top:515px;left:292px"> </div>
<div class="l sw" style="top:515px;left:299px">S </div>
<div class="l sw" style="top:515px;left:313px"> 0.0 </div>
<div class="l sw" style="top:515px;left:348px"> 0.0 </div>
<div class="l sw" style="top:515px;left:383px"> 0:00.03 </div>
<div class="l sg" style="top:515px;left:446px">/usr/bin/python2 -Es /usr/sbin/tuned -l -P</div>
<div class="l sw" style="top:530px;left:5px"> 1972 </div>
<div class="l sw" style="top:530px;left:47px">root      </div>
<div class="l sw" style="top:530px;left:117px"> 20 </div>
<div class="l sw" style="top:530px;left:145px">  0 </div>
<div class="l sc" style="top:530px;left:173px"> 560M</div>
<div class="l sw" style="top:530px;left:208px"> </div>
<div class="l sc" style="top:530px;left:215px"> 2</div>
<div class="l sw" style="top:530px;left:229px">052</div>
<div class="l sw" style="top:530px;left:250px"> </div>
<div class="l sw" style="top:530px;left:257px">  564</div>
<div class="l sw" style="top:530px;left:292px"> </div>
<div class="l sw" style="top:530px;left:299px">S </div>
<div class="l sw" style="top:530px;left:313px"> 0.0 </div>
<div class="l sw" style="top:530px;left:348px"> 0.0 </div>
<div class="l sw" style="top:530px;left:383px"> 0:00.00 </div>
<div class="l sg" style="top:530px;left:446px">/usr/bin/python2 -Es /usr/sbin/tuned -l -P</div>
<div class="l sw" style="top:545px;left:5px">  912 </div>
<div class="l sw" style="top:545px;left:47px">root      </div>
<div class="l sw" style="top:545px;left:117px"> 20 </div>
<div class="l sw" style="top:545px;left:145px">  0 </div>
<div class="l sc" style="top:545px;left:173px"> 560M</div>
<div class="l sw" style="top:545px;left:208px"> </div>
<div class="l sc" style="top:545px;left:215px"> 2</div>
<div class="l sw" style="top:545px;left:229px">052</div>
<div class="l sw" style="top:545px;left:250px"> </div>
<div class="l sw" style="top:545px;left:257px">  564</div>
<div class="l sw" style="top:545px;left:292px"> </div>
<div class="l sw" style="top:545px;left:299px">S </div>
<div class="l sw" style="top:545px;left:313px"> 0.0 </div>
<div class="l sw" style="top:545px;left:348px"> 0.0 </div>
<div class="l sw" style="top:545px;left:383px"> 3:53.80 </div>
<div class="l sw" style="top:545px;left:446px">/usr/bin/python2 -Es /usr/sbin/tuned -l -P</div>
<div class="l sw" style="top:560px;left:5px">  923 </div>
<div class="l sw" style="top:560px;left:47px">root      </div>
<div class="l sw" style="top:560px;left:117px"> 20 </div>
<div class="l sw" style="top:560px;left:145px">  0 </div>
<div class="l sc" style="top:560px;left:173px">25</div>
<div class="l sw" style="top:560px;left:187px">044</div>
<div class="l sw" style="top:560px;left:208px"> </div>
<div class="l sw" style="top:560px;left:215px">  136</div>
<div class="l sw" style="top:560px;left:250px"> </div>
<div class="l sw" style="top:560px;left:257px">  136</div>
<div class="l sw" style="top:560px;left:292px"> </div>
<div class="l sw" style="top:560px;left:299px">S </div>
<div class="l sw" style="top:560px;left:313px"> 0.0 </div>
<div class="l sw" style="top:560px;left:348px"> 0.0 </div>
<div class="l sw" style="top:560px;left:383px"> 0:00.00 </div>
<div class="l sw" style="top:560px;left:446px">/usr/sbin/xinetd -stayalive -pidfile /var/run/xinetd.pid</div>
<div class="l sw" style="top:575px;left:5px">  933 </div>
<div class="l sd" style="top:575px;left:47px">nobody    </div>
<div class="l sw" style="top:575px;left:117px"> 20 </div>
<div class="l sw" style="top:575px;left:145px">  0 </div>
<div class="l sc" style="top:575px;left:173px">13</div>
<div class="l sw" style="top:575px;left:187px">652</div>
<div class="l sw" style="top:575px;left:208px"> </div>
<div class="l sw" style="top:575px;left:215px">  880</div>
<div class="l sw" style="top:575px;left:250px"> </div>
<div class="l sw" style="top:575px;left:257px">  212</div>
<div class="l sw" style="top:575px;left:292px"> </div>
<div class="l sw" style="top:575px;left:299px">S </div>
<div class="l sw" style="top:575px;left:313px"> 0.0 </div>
<div class="l sw" style="top:575px;left:348px"> 0.0 </div>
<div class="l sw" style="top:575px;left:383px"> 0:39.46 </div>
<div class="l sw" style="top:575px;left:446px">/usr/local/checker/sbin/thttpd -C /usr/local/checker/etc/thttpd.conf</div>
<div class="l sw" style="top:590px;left:5px">  987 </div>
<div class="l sw" style="top:590px;left:47px">root      </div>
<div class="l sw" style="top:590px;left:117px"> 20 </div>
<div class="l sw" style="top:590px;left:145px">  0 </div>
<div class="l sc" style="top:590px;left:173px">88</div>
<div class="l sw" style="top:590px;left:187px">948</div>
<div class="l sw" style="top:590px;left:208px"> </div>
<div class="l sw" style="top:590px;left:215px">  776</div>
<div class="l sw" style="top:590px;left:250px"> </div>
<div class="l sw" style="top:590px;left:257px">  544</div>
<div class="l sw" style="top:590px;left:292px"> </div>
<div class="l sw" style="top:590px;left:299px">S </div>
<div class="l sw" style="top:590px;left:313px"> 0.0 </div>
<div class="l sw" style="top:590px;left:348px"> 0.0 </div>
<div class="l sw" style="top:590px;left:383px"> 0:51.96 </div>
<div class="l sw" style="top:590px;left:446px">sendmail: accepting connections</div>
<div class="l sw" style="top:605px;left:5px"> 1020 </div>
<div class="l sw" style="top:605px;left:47px">root      </div>
<div class="l sw" style="top:605px;left:117px"> 20 </div>
<div class="l sw" style="top:605px;left:145px">  0 </div>
<div class="l sc" style="top:605px;left:173px">23</div>
<div class="l sw" style="top:605px;left:187px">360</div>
<div class="l sw" style="top:605px;left:208px"> </div>
<div class="l sw" style="top:605px;left:215px">  264</div>
<div class="l sw" style="top:605px;left:250px"> </div>
<div class="l sw" style="top:605px;left:257px">  228</div>
<div class="l sw" style="top:605px;left:292px"> </div>
<div class="l sw" style="top:605px;left:299px">S </div>
<div class="l sw" style="top:605px;left:313px"> 0.0 </div>
<div class="l sw" style="top:605px;left:348px"> 0.0 </div>
<div class="l sw" style="top:605px;left:383px"> 0:23.87 </div>
<div class="l sw" style="top:605px;left:446px">/usr/sbin/ipmievd sel daemon pidfile=/var/run/ipmievd.pid</div>
<div class="l sw" style="top:620px;left:5px"> 1089 </div>
<div class="l sw" style="top:620px;left:47px">root      </div>
<div class="l sw" style="top:620px;left:117px"> 20 </div>
<div class="l sw" style="top:620px;left:145px">  0 </div>
<div class="l sc" style="top:620px;left:173px">99</div>
<div class="l sw" style="top:620px;left:187px">368</div>
<div class="l sw" style="top:620px;left:208px"> </div>
<div class="l sw" style="top:620px;left:215px">  360</div>
<div class="l sw" style="top:620px;left:250px"> </div>
<div class="l sw" style="top:620px;left:257px">  360</div>
<div class="l sw" style="top:620px;left:292px"> </div>
<div class="l sw" style="top:620px;left:299px">S </div>
<div class="l sw" style="top:620px;left:313px"> 0.0 </div>
<div class="l sw" style="top:620px;left:348px"> 0.0 </div>
<div class="l sw" style="top:620px;left:383px"> 0:00.06 </div>
<div class="l sw" style="top:620px;left:446px">login -- root</div>
<div class="l sw" style="top:635px;left:5px"> 1102 </div>
<div class="l sd" style="top:635px;left:47px">smmsp     </div>
<div class="l sw" style="top:635px;left:117px"> 20 </div>
<div class="l sw" style="top:635px;left:145px">  0 </div>
<div class="l sc" style="top:635px;left:173px">84</div>
<div class="l sw" style="top:635px;left:187px">384</div>
<div class="l sw" style="top:635px;left:208px"> </div>
<div class="l sw" style="top:635px;left:215px">  540</div>
<div class="l sw" style="top:635px;left:250px"> </div>
<div class="l sw" style="top:635px;left:257px">  396</div>
<div class="l sw" style="top:635px;left:292px"> </div>
<div class="l sw" style="top:635px;left:299px">S </div>
<div class="l sw" style="top:635px;left:313px"> 0.0 </div>
<div class="l sw" style="top:635px;left:348px"> 0.0 </div>
<div class="l sw" style="top:635px;left:383px"> 0:00.33 </div>
<div class="l sw" style="top:635px;left:446px">sendmail: Queue runner@01:00:00 for /var/spool/clientmqueue</div>
<div class="l sw" style="top:650px;left:5px"> 1276 </div>
<div class="l sw" style="top:650px;left:47px">root      </div>
<div class="l sw" style="top:650px;left:117px"> 20 </div>
<div class="l sw" style="top:650px;left:145px">  0 </div>
<div class="l sc" style="top:650px;left:173px"> 112M</div>
<div class="l sw" style="top:650px;left:208px"> </div>
<div class="l sw" style="top:650px;left:215px">  272</div>
<div class="l sw" style="top:650px;left:250px"> </div>
<div class="l sw" style="top:650px;left:257px">  268</div>
<div class="l sw" style="top:650px;left:292px"> </div>
<div class="l sw" style="top:650px;left:299px">S </div>
<div class="l sw" style="top:650px;left:313px"> 0.0 </div>
<div class="l sw" style="top:650px;left:348px"> 0.0 </div>
<div class="l sw" style="top:650px;left:383px"> 0:00.02 </div>
<div class="l sw" style="top:650px;left:446px">/bin/sh /app/applications/mysql/bin/mysqld_safe --datadir=/data/mariadb/database --pid-file=/data/mariadb/database/localhost.pid</div>
<div class="l sw" style="top:665px;left:5px"> 2054 </div>
<div class="l sd" style="top:665px;left:47px">mysql     </div>
<div class="l sw" style="top:665px;left:117px"> 20 </div>
<div class="l sw" style="top:665px;left:145px">  0 </div>
<div class="l sc" style="top:665px;left:173px">6891M</div>
<div class="l sw" style="top:665px;left:208px"> </div>
<div class="l sc" style="top:665px;left:215px">3785M</div>
<div class="l sw" style="top:665px;left:250px"> </div>
<div class="l sc" style="top:665px;left:257px"> 7</div>
<div class="l sw" style="top:665px;left:271px">772</div>
<div class="l sw" style="top:665px;left:292px"> </div>
<div class="l sw" style="top:665px;left:299px">S </div>
<div class="l sw" style="top:665px;left:313px"> 0.0 </div>
<div class="l sw" style="top:665px;left:348px">48.7 </div>
<div class="l sw" style="top:665px;left:383px"> 5:49.65 </div>
<div class="l sg" style="top:665px;left:446px">/app/applications/mysql/bin/mariadbd --basedir=/app/applications/mysql --datadir=/data/mariadb/database --plugin-dir=/app/applications/mysql/lib/plugin --user=mysql --log-error=/data/mariadb/database/localhost.err --pid-file=/data/mariadb/dat</div>
<div class="l sw" style="top:680px;left:5px"> 2055 </div>
<div class="l sd" style="top:680px;left:47px">mysql     </div>
<div class="l sw" style="top:680px;left:117px"> 20 </div>
<div class="l sw" style="top:680px;left:145px">  0 </div>
<div class="l sc" style="top:680px;left:173px">6891M</div>
<div class="l sw" style="top:680px;left:208px"> </div>
<div class="l sc" style="top:680px;left:215px">3785M</div>
<div class="l sw" style="top:680px;left:250px"> </div>
<div class="l sc" style="top:680px;left:257px"> 7</div>
<div class="l sw" style="top:680px;left:271px">772</div>
<div class="l sw" style="top:680px;left:292px"> </div>
<div class="l sw" style="top:680px;left:299px">S </div>
<div class="l sw" style="top:680px;left:313px"> 0.0 </div>
<div class="l sw" style="top:680px;left:348px">48.7 </div>
<div class="l sw" style="top:680px;left:383px"> 0:02.95 </div>
<div class="l sg" style="top:680px;left:446px">/app/applications/mysql/bin/mariadbd --basedir=/app/applications/mysql --datadir=/data/mariadb/database --plugin-dir=/app/applications/mysql/lib/plugin --user=mysql --log-error=/data/mariadb/database/localhost.err --pid-file=/data/mariadb/dat</div>
<div class="l sw" style="top:695px;left:5px"> 2056 </div>
<div class="l sd" style="top:695px;left:47px">mysql     </div>
<div class="l sw" style="top:695px;left:117px"> 20 </div>
<div class="l sw" style="top:695px;left:145px">  0 </div>
<div class="l sc" style="top:695px;left:173px">6891M</div>
<div class="l sw" style="top:695px;left:208px"> </div>
<div class="l sc" style="top:695px;left:215px">3785M</div>
<div class="l sw" style="top:695px;left:250px"> </div>
<div class="l sc" style="top:695px;left:257px"> 7</div>
<div class="l sw" style="top:695px;left:271px">772</div>
<div class="l sw" style="top:695px;left:292px"> </div>
<div class="l sw" style="top:695px;left:299px">S </div>
<div class="l sw" style="top:695px;left:313px"> 0.0 </div>
<div class="l sw" style="top:695px;left:348px">48.7 </div>
<div class="l sw" style="top:695px;left:383px"> 0:05.29 </div>
<div class="l sg" style="top:695px;left:446px">/app/applications/mysql/bin/mariadbd --basedir=/app/applications/mysql --datadir=/data/mariadb/database --plugin-dir=/app/applications/mysql/lib/plugin --user=mysql --log-error=/data/mariadb/database/localhost.err --pid-file=/data/mariadb/dat</div>
<div class="l sw" style="top:710px;left:5px"> 2059 </div>
<div class="l sd" style="top:710px;left:47px">mysql     </div>
<div class="l sw" style="top:710px;left:117px"> 20 </div>
<div class="l sw" style="top:710px;left:145px">  0 </div>
<div class="l sc" style="top:710px;left:173px">6891M</div>
<div class="l sw" style="top:710px;left:208px"> </div>
<div class="l sc" style="top:710px;left:215px">3785M</div>
<div class="l sw" style="top:710px;left:250px"> </div>
<div class="l sc" style="top:710px;left:257px"> 7</div>
<div class="l sw" style="top:710px;left:271px">772</div>
<div class="l sw" style="top:710px;left:292px"> </div>
<div class="l sw" style="top:710px;left:299px">S </div>
<div class="l sw" style="top:710px;left:313px"> 0.0 </div>
<div class="l sw" style="top:710px;left:348px">48.7 </div>
<div class="l sw" style="top:710px;left:383px"> 0:07.70 </div>
<div class="l sg" style="top:710px;left:446px">/app/applications/mysql/bin/mariadbd --basedir=/app/applications/mysql --datadir=/data/mariadb/database --plugin-dir=/app/applications/mysql/lib/plugin --user=mysql --log-error=/data/mariadb/database/localhost.err --pid-file=/data/mariadb/dat</div>
<div class="l sw" style="top:725px;left:5px"> 2649 </div>
<div class="l sd" style="top:725px;left:47px">mysql     </div>
<div class="l sw" style="top:725px;left:117px"> 20 </div>
<div class="l sw" style="top:725px;left:145px">  0 </div>
<div class="l sc" style="top:725px;left:173px">6891M</div>
<div class="l sw" style="top:725px;left:208px"> </div>
<div class="l sc" style="top:725px;left:215px">3785M</div>
<div class="l sw" style="top:725px;left:250px"> </div>
<div class="l sc" style="top:725px;left:257px"> 7</div>
<div class="l sw" style="top:725px;left:271px">772</div>
<div class="l sw" style="top:725px;left:292px"> </div>
<div class="l sw" style="top:725px;left:299px">S </div>
<div class="l sw" style="top:725px;left:313px"> 0.0 </div>
<div class="l sw" style="top:725px;left:348px">48.7 </div>
<div class="l sw" style="top:725px;left:383px"> 0:00.00 </div>
<div class="l sg" style="top:725px;left:446px">/app/applications/mysql/bin/mariadbd --basedir=/app/applications/mysql --datadir=/data/mariadb/database --plugin-dir=/app/applications/mysql/lib/plugin --user=mysql --log-error=/data/mariadb/database/localhost.err --pid-file=/data/mariadb/dat</div>
<div class="l sw" style="top:740px;left:5px"> 2654 </div>
<div class="l sd" style="top:740px;left:47px">mysql     </div>
<div class="l sw" style="top:740px;left:117px"> 20 </div>
<div class="l sw" style="top:740px;left:145px">  0 </div>
<div class="l sc" style="top:740px;left:173px">6891M</div>
<div class="l sw" style="top:740px;left:208px"> </div>
<div class="l sc" style="top:740px;left:215px">3785M</div>
<div class="l sw" style="top:740px;left:250px"> </div>
<div class="l sc" style="top:740px;left:257px"> 7</div>
<div class="l sw" style="top:740px;left:271px">772</div>
<div class="l sw" style="top:740px;left:292px"> </div>
<div class="l sw" style="top:740px;left:299px">S </div>
<div class="l sw" style="top:740px;left:313px"> 0.0 </div>
<div class="l sw" style="top:740px;left:348px">48.7 </div>
<div class="l sw" style="top:740px;left:383px"> 2:56.90 </div>
<div class="l sg" style="top:740px;left:446px">/app/applications/mysql/bin/mariadbd --basedir=/app/applications/mysql --datadir=/data/mariadb/database --plugin-dir=/app/applications/mysql/lib/plugin --user=mysql --log-error=/data/mariadb/database/localhost.err --pid-file=/data/mariadb/dat</div>
<div class="l sw" style="top:755px;left:5px"> 2655 </div>
<div class="l sd" style="top:755px;left:47px">mysql     </div>
<div class="l sw" style="top:755px;left:117px"> 20 </div>
<div class="l sw" style="top:755px;left:145px">  0 </div>
<div class="l sc" style="top:755px;left:173px">6891M</div>
<div class="l sw" style="top:755px;left:208px"> </div>
<div class="l sc" style="top:755px;left:215px">3785M</div>
<div class="l sw" style="top:755px;left:250px"> </div>
<div class="l sc" style="top:755px;left:257px"> 7</div>
<div class="l sw" style="top:755px;left:271px">772</div>
<div class="l sw" style="top:755px;left:292px"> </div>
<div class="l sw" style="top:755px;left:299px">S </div>
<div class="l sw" style="top:755px;left:313px"> 0.0 </div>
<div class="l sw" style="top:755px;left:348px">48.7 </div>
<div class="l sw" style="top:755px;left:383px"> 0:00.00 </div>
<div class="l sg" style="top:755px;left:446px">/app/applications/mysql/bin/mariadbd --basedir=/app/applications/mysql --datadir=/data/mariadb/database --plugin-dir=/app/applications/mysql/lib/plugin --user=mysql --log-error=/data/mariadb/database/localhost.err --pid-file=/data/mariadb/dat</div>
<div class="l sw" style="top:770px;left:5px"> 1179 </div>
<div class="l sd" style="top:770px;left:47px">mysql     </div>
<div class="l sw" style="top:770px;left:117px"> 20 </div>
<div class="l sw" style="top:770px;left:145px">  0 </div>
<div class="l sc" style="top:770px;left:173px">6891M</div>
<div class="l sw" style="top:770px;left:208px"> </div>
<div class="l sc" style="top:770px;left:215px">3785M</div>
<div class="l sw" style="top:770px;left:250px"> </div>
<div class="l sc" style="top:770px;left:257px"> 7</div>
<div class="l sw" style="top:770px;left:271px">772</div>
<div class="l sw" style="top:770px;left:292px"> </div>
<div class="l sw" style="top:770px;left:299px">S </div>
<div class="l sw" style="top:770px;left:313px"> 0.0 </div>
<div class="l sw" style="top:770px;left:348px">48.7 </div>
<div class="l sw" style="top:770px;left:383px"> 0:14.37 </div>
<div class="l sg" style="top:770px;left:446px">/app/applications/mysql/bin/mariadbd --basedir=/app/applications/mysql --datadir=/data/mariadb/database --plugin-dir=/app/applications/mysql/lib/plugin --user=mysql --log-error=/data/mariadb/database/localhost.err --pid-file=/data/mariadb/dat</div>
<div class="l sw" style="top:785px;left:5px">14718 </div>
<div class="l sd" style="top:785px;left:47px">mysql     </div>
<div class="l sw" style="top:785px;left:117px"> 20 </div>
<div class="l sw" style="top:785px;left:145px">  0 </div>
<div class="l sc" style="top:785px;left:173px">6891M</div>
<div class="l sw" style="top:785px;left:208px"> </div>
<div class="l sc" style="top:785px;left:215px">3785M</div>
<div class="l sw" style="top:785px;left:250px"> </div>
<div class="l sc" style="top:785px;left:257px"> 7</div>
<div class="l sw" style="top:785px;left:271px">772</div>
<div class="l sw" style="top:785px;left:292px"> </div>
<div class="l sw" style="top:785px;left:299px">S </div>
<div class="l sw" style="top:785px;left:313px"> 0.0 </div>
<div class="l sw" style="top:785px;left:348px">48.7 </div>
<div class="l sw" style="top:785px;left:383px"> 0:01.02 </div>
<div class="l sg" style="top:785px;left:446px">/app/applications/mysql/bin/mariadbd --basedir=/app/applications/mysql --datadir=/data/mariadb/database --plugin-dir=/app/applications/mysql/lib/plugin --user=mysql --log-error=/data/mariadb/database/localhost.err --pid-file=/data/mariadb/dat</div>
<div class="l sw" style="top:800px;left:5px">22236 </div>
<div class="l sd" style="top:800px;left:47px">mysql     </div>
<div class="l sw" style="top:800px;left:117px"> 20 </div>
<div class="l sw" style="top:800px;left:145px">  0 </div>
<div class="l sc" style="top:800px;left:173px">6891M</div>
<div class="l sw" style="top:800px;left:208px"> </div>
<div class="l sc" style="top:800px;left:215px">3785M</div>
<div class="l sw" style="top:800px;left:250px"> </div>
<div class="l sc" style="top:800px;left:257px"> 7</div>
<div class="l sw" style="top:800px;left:271px">772</div>
<div class="l sw" style="top:800px;left:292px"> </div>
<div class="l sw" style="top:800px;left:299px">S </div>
<div class="l sw" style="top:800px;left:313px"> 0.0 </div>
<div class="l sw" style="top:800px;left:348px">48.7 </div>
<div class="l sw" style="top:800px;left:383px"> 0:00.36 </div>
<div class="l sg" style="top:800px;left:446px">/app/applications/mysql/bin/mariadbd --basedir=/app/applications/mysql --datadir=/data/mariadb/database --plugin-dir=/app/applications/mysql/lib/plugin --user=mysql --log-error=/data/mariadb/database/localhost.err --pid-file=/data/mariadb/dat</div>
<div class="l sw" style="top:815px;left:5px">24227 </div>
<div class="l sd" style="top:815px;left:47px">mysql     </div>
<div class="l sw" style="top:815px;left:117px"> 20 </div>
<div class="l sw" style="top:815px;left:145px">  0 </div>
<div class="l sc" style="top:815px;left:173px">6891M</div>
<div class="l sw" style="top:815px;left:208px"> </div>
<div class="l sc" style="top:815px;left:215px">3785M</div>
<div class="l sw" style="top:815px;left:250px"> </div>
<div class="l sc" style="top:815px;left:257px"> 7</div>
<div class="l sw" style="top:815px;left:271px">772</div>
<div class="l sw" style="top:815px;left:292px"> </div>
<div class="l sw" style="top:815px;left:299px">S </div>
<div class="l sw" style="top:815px;left:313px"> 0.0 </div>
<div class="l sw" style="top:815px;left:348px">48.7 </div>
<div class="l sw" style="top:815px;left:383px"> 0:00.13 </div>
<div class="l sg" style="top:815px;left:446px">/app/applications/mysql/bin/mariadbd --basedir=/app/applications/mysql --datadir=/data/mariadb/database --plugin-dir=/app/applications/mysql/lib/plugin --user=mysql --log-error=/data/mariadb/database/localhost.err --pid-file=/data/mariadb/dat</div>
<div class="l sw" style="top:830px;left:5px">28065 </div>
<div class="l sd" style="top:830px;left:47px">mysql     </div>
<div class="l sw" style="top:830px;left:117px"> 20 </div>
<div class="l sw" style="top:830px;left:145px">  0 </div>
<div class="l sc" style="top:830px;left:173px">6891M</div>
<div class="l sw" style="top:830px;left:208px"> </div>
<div class="l sc" style="top:830px;left:215px">3785M</div>
<div class="l sw" style="top:830px;left:250px"> </div>
<div class="l sc" style="top:830px;left:257px"> 7</div>
<div class="l sw" style="top:830px;left:271px">772</div>
<div class="l sw" style="top:830px;left:292px"> </div>
<div class="l sw" style="top:830px;left:299px">S </div>
<div class="l sw" style="top:830px;left:313px"> 0.0 </div>
<div class="l sw" style="top:830px;left:348px">48.7 </div>
<div class="l sw" style="top:830px;left:383px"> 0:00.04 </div>
<div class="l sg" style="top:830px;left:446px">/app/applications/mysql/bin/mariadbd --basedir=/app/applications/mysql --datadir=/data/mariadb/database --plugin-dir=/app/applications/mysql/lib/plugin --user=mysql --log-error=/data/mariadb/database/localhost.err --pid-file=/data/mariadb/dat</div>
<div class="l sw" style="top:845px;left:5px">28312 </div>
<div class="l sd" style="top:845px;left:47px">mysql     </div>
<div class="l sw" style="top:845px;left:117px"> 20 </div>
<div class="l sw" style="top:845px;left:145px">  0 </div>
<div class="l sc" style="top:845px;left:173px">6891M</div>
<div class="l sw" style="top:845px;left:208px"> </div>
<div class="l sc" style="top:845px;left:215px">3785M</div>
<div class="l sw" style="top:845px;left:250px"> </div>
<div class="l sc" style="top:845px;left:257px"> 7</div>
<div class="l sw" style="top:845px;left:271px">772</div>
<div class="l sw" style="top:845px;left:292px"> </div>
<div class="l sw" style="top:845px;left:299px">S </div>
<div class="l sw" style="top:845px;left:313px"> 0.0 </div>
<div class="l sw" style="top:845px;left:348px">48.7 </div>
<div class="l sw" style="top:845px;left:383px"> 0:00.00 </div>
<div class="l sg" style="top:845px;left:446px">/app/applications/mysql/bin/mariadbd --basedir=/app/applications/mysql --datadir=/data/mariadb/database --plugin-dir=/app/applications/mysql/lib/plugin --user=mysql --log-error=/data/mariadb/database/localhost.err --pid-file=/data/mariadb/dat</div>
<div class="l sw" style="top:860px;left:5px">28313 </div>
<div class="l sd" style="top:860px;left:47px">mysql     </div>
<div class="l sw" style="top:860px;left:117px"> 20 </div>
<div class="l sw" style="top:860px;left:145px">  0 </div>
<div class="l sc" style="top:860px;left:173px">6891M</div>
<div class="l sw" style="top:860px;left:208px"> </div>
<div class="l sc" style="top:860px;left:215px">3785M</div>
<div class="l sw" style="top:860px;left:250px"> </div>
<div class="l sc" style="top:860px;left:257px"> 7</div>
<div class="l sw" style="top:860px;left:271px">772</div>
<div class="l sw" style="top:860px;left:292px"> </div>
<div class="l sw" style="top:860px;left:299px">S </div>
<div class="l sw" style="top:860px;left:313px"> 0.0 </div>
<div class="l sw" style="top:860px;left:348px">48.7 </div>
<div class="l sw" style="top:860px;left:383px"> 0:00.00 </div>
<div class="l sg" style="top:860px;left:446px">/app/applications/mysql/bin/mariadbd --basedir=/app/applications/mysql --datadir=/data/mariadb/database --plugin-dir=/app/applications/mysql/lib/plugin --user=mysql --log-error=/data/mariadb/database/localhost.err --pid-file=/data/mariadb/dat</div>
<div class="l sw" style="top:875px;left:5px">28314 </div>
<div class="l sd" style="top:875px;left:47px">mysql     </div>
<div class="l sw" style="top:875px;left:117px"> 20 </div>
<div class="l sw" style="top:875px;left:145px">  0 </div>
<div class="l sc" style="top:875px;left:173px">6891M</div>
<div class="l sw" style="top:875px;left:208px"> </div>
<div class="l sc" style="top:875px;left:215px">3785M</div>
<div class="l sw" style="top:875px;left:250px"> </div>
<div class="l sc" style="top:875px;left:257px"> 7</div>
<div class="l sw" style="top:875px;left:271px">772</div>
<div class="l sw" style="top:875px;left:292px"> </div>
<div class="l sw" style="top:875px;left:299px">S </div>
<div class="l sw" style="top:875px;left:313px"> 0.0 </div>
<div class="l sw" style="top:875px;left:348px">48.7 </div>
<div class="l sw" style="top:875px;left:383px"> 0:00.00 </div>
<div class="l sg" style="top:875px;left:446px">/app/applications/mysql/bin/mariadbd --basedir=/app/applications/mysql --datadir=/data/mariadb/database --plugin-dir=/app/applications/mysql/lib/plugin --user=mysql --log-error=/data/mariadb/database/localhost.err --pid-file=/data/mariadb/dat</div>
<div class="l sw" style="top:890px;left:5px">28315 </div>
<div class="l sd" style="top:890px;left:47px">mysql     </div>
<div class="l sw" style="top:890px;left:117px"> 20 </div>
<div class="l sw" style="top:890px;left:145px">  0 </div>
<div class="l sc" style="top:890px;left:173px">6891M</div>
<div class="l sw" style="top:890px;left:208px"> </div>
<div class="l sc" style="top:890px;left:215px">3785M</div>
<div class="l sw" style="top:890px;left:250px"> </div>
<div class="l sc" style="top:890px;left:257px"> 7</div>
<div class="l sw" style="top:890px;left:271px">772</div>
<div class="l sw" style="top:890px;left:292px"> </div>
<div class="l sw" style="top:890px;left:299px">S </div>
<div class="l sw" style="top:890px;left:313px"> 0.0 </div>
<div class="l sw" style="top:890px;left:348px">48.7 </div>
<div class="l sw" style="top:890px;left:383px"> 0:00.00 </div>
<div class="l sg" style="top:890px;left:446px">/app/applications/mysql/bin/mariadbd --basedir=/app/applications/mysql --datadir=/data/mariadb/database --plugin-dir=/app/applications/mysql/lib/plugin --user=mysql --log-error=/data/mariadb/database/localhost.err --pid-file=/data/mariadb/dat</div>
<div class="l sw" style="top:905px;left:5px"> 2044 </div>
<div class="l sd" style="top:905px;left:47px">mysql     </div>
<div class="l sw" style="top:905px;left:117px"> 20 </div>
<div class="l sw" style="top:905px;left:145px">  0 </div>
<div class="l sc" style="top:905px;left:173px">6891M</div>
<div class="l sw" style="top:905px;left:208px"> </div>
<div class="l sc" style="top:905px;left:215px">3785M</div>
<div class="l sw" style="top:905px;left:250px"> </div>
<div class="l sc" style="top:905px;left:257px"> 7</div>
<div class="l sw" style="top:905px;left:271px">772</div>
<div class="l sw" style="top:905px;left:292px"> </div>
<div class="l sw" style="top:905px;left:299px">S </div>
<div class="l sw" style="top:905px;left:313px"> 0.0 </div>
<div class="l sw" style="top:905px;left:348px">48.7 </div>
<div class="l sR" style="top:905px;left:383px">24h</div>
<div class="l sw" style="top:905px;left:404px">15:16 </div>
<div class="l sw" style="top:905px;left:446px">/app/applications/mysql/bin/mariadbd --basedir=/app/applications/mysql --datadir=/data/mariadb/database --plugin-dir=/app/applications/mysql/lib/plugin --user=mysql --log-error=/data/mariadb/database/localhost.err --pid-file=/data/mariadb/dat</div>
<div class="l sw" style="top:920px;left:5px"> 2350 </div>
<div class="l sw" style="top:920px;left:47px">root      </div>
<div class="l sw" style="top:920px;left:117px"> 20 </div>
<div class="l sw" style="top:920px;left:145px">  0 </div>
<div class="l sc" style="top:920px;left:173px"> 157M</div>
<div class="l sw" style="top:920px;left:208px"> </div>
<div class="l sc" style="top:920px;left:215px"> 6</div>
<div class="l sw" style="top:920px;left:229px">048</div>
<div class="l sw" style="top:920px;left:250px"> </div>
<div class="l sc" style="top:920px;left:257px"> 4</div>
<div class="l sw" style="top:920px;left:271px">664</div>
<div class="l sw" style="top:920px;left:292px"> </div>
<div class="l sw" style="top:920px;left:299px">S </div>
<div class="l sw" style="top:920px;left:313px"> 0.0 </div>
<div class="l sw" style="top:920px;left:348px"> 0.1 </div>
<div class="l sw" style="top:920px;left:383px"> 0:00.02 </div>
<div class="l sw" style="top:920px;left:446px">sshd: apache [priv]</div>
<div class="l sw" style="top:935px;left:5px"> 2352 </div>
<div class="l sd" style="top:935px;left:47px">apache    </div>
<div class="l sw" style="top:935px;left:117px"> 20 </div>
<div class="l sw" style="top:935px;left:145px">  0 </div>
<div class="l sc" style="top:935px;left:173px"> 157M</div>
<div class="l sw" style="top:935px;left:208px"> </div>
<div class="l sc" style="top:935px;left:215px"> 2</div>
<div class="l sw" style="top:935px;left:229px">528</div>
<div class="l sw" style="top:935px;left:250px"> </div>
<div class="l sc" style="top:935px;left:257px"> 1</div>
<div class="l sw" style="top:935px;left:271px">072</div>
<div class="l sw" style="top:935px;left:292px"> </div>
<div class="l sw" style="top:935px;left:299px">S </div>
<div class="l sw" style="top:935px;left:313px"> 0.0 </div>
<div class="l sw" style="top:935px;left:348px"> 0.0 </div>
<div class="l sw" style="top:935px;left:383px"> 0:00.05 </div>
<div class="l sw" style="top:935px;left:446px">sshd: apache@notty</div>
<div class="l sw" style="top:950px;left:5px">F1</div>
<div class="l sK" style="top:950px;left:19px">Help  </div>
<div class="l sw" style="top:950px;left:61px">F2</div>
<div class="l sK" style="top:950px;left:75px">Setup </div>
<div class="l sw" style="top:950px;left:117px">F3</div>
<div class="l sK" style="top:950px;left:131px">Search</div>
<div class="l sw" style="top:950px;left:173px">F4</div>
<div class="l sK" style="top:950px;left:187px">Filter</div>
<div class="l sw" style="top:950px;left:229px">F5</div>
<div class="l sK" style="top:950px;left:243px">Tree  </div>
<div class="l sw" style="top:950px;left:285px">F6</div>
<div class="l sK" style="top:950px;left:299px">SortBy</div>
<div class="l sw" style="top:950px;left:341px">F7</div>
<div class="l sK" style="top:950px;left:355px">Nice -</div>
<div class="l sw" style="top:950px;left:397px">F8</div>
<div class="l sK" style="top:950px;left:411px">Nice +</div>
<div class="l sw" style="top:950px;left:453px">F9</div>
<div class="l sK" style="top:950px;left:467px">Kill  </div>
<div class="l sw" style="top:950px;left:509px">F10</div>
<div class="l sK" style="top:950px;left:530px">Quit  </div>
</div>
<div id="sb"></div><div id="th"></div>
<svg style="position:absolute;left:2151px;top:0" width="17" height="17"><path d="M5.5 11.5 L8.5 7.2 L11.5 11.5" stroke="#505050" stroke-width="2" fill="none"/></svg>
<svg style="position:absolute;left:2151px;top:954px" width="17" height="17"><path d="M5.5 6 L8.5 10.3 L11.5 6" stroke="#505050" stroke-width="2" fill="none"/></svg>
</body></html>
